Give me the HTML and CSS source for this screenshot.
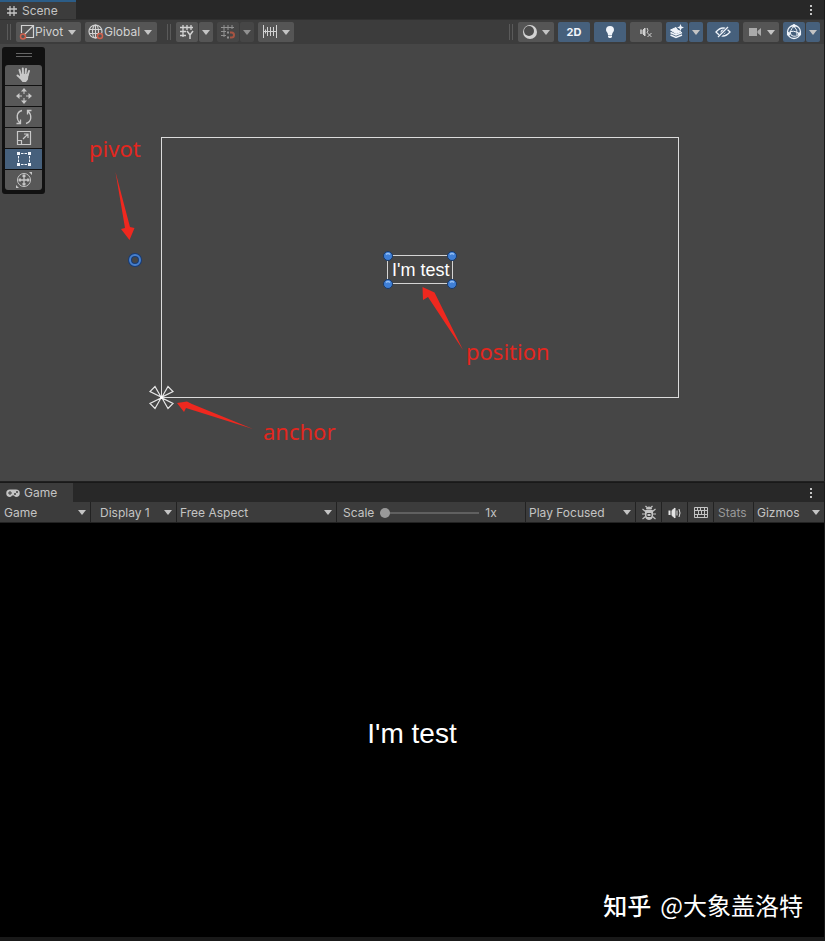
FILE: index.html
```html
<!DOCTYPE html>
<html lang="en">
<head>
<meta charset="utf-8">
<title>Scene and Game</title>
<link rel="stylesheet" href="styles.css">
</head>
<body>
<svg class="defs" aria-hidden="true">
  <symbol id="caret" viewBox="0 0 8 5"><path d="M0 0h8L4 5z" fill="currentColor"/></symbol>
  <symbol id="more" viewBox="0 0 4 12"><path d="M1 1h2v2H1zM1 5h2v2H1zM1 9h2v2H1z" fill="currentColor"/></symbol>
</svg>

<section class="panel scene">
  <header class="tabs">
    <button class="tab tab-focused">
      <svg class="tab-icon" width="12" height="12" viewBox="0 0 12 12"><path d="M4 1v10M8 1v10M1 4h10M1 8h10" stroke="currentColor" stroke-width="1.300" fill="none"/></svg>
      Scene
    </button>
    <button class="more" aria-label="Scene menu"><svg width="4" height="12"><use href="#more"/></svg></button>
  </header>

  <div class="toolbar">
    <div class="group">
      <i class="grip"></i>
      <label class="btn pick">
        <svg width="16" height="16" viewBox="0 0 16 16" fill="none"><path d="M2.500 9V1.500h12v12H7M5 11L14 2" stroke="currentColor" stroke-width="1.200"/><circle cx="4" cy="12.500" r="2.500" stroke="#d0604c" stroke-width="1.500"/></svg>
        <select class="pivot-select" aria-label="Tool handle position"><option>Pivot</option><option>Center</option></select>
        <svg class="caret" width="8" height="5"><use href="#caret"/></svg>
      </label>
      <label class="btn pick">
        <svg width="16" height="16" viewBox="0 0 16 16" fill="none"><g stroke="currentColor" stroke-width="1.200"><circle cx="7.500" cy="7.500" r="6.500"/><ellipse cx="7.500" cy="7.500" rx="3" ry="6.500"/><path d="M7.500 1v13M1.500 5.500h12M1.500 9.500h12"/></g><circle cx="12" cy="12" r="2.500" fill="#585858" stroke="#d0604c" stroke-width="1.500"/></svg>
        <select class="global-select" aria-label="Tool handle rotation"><option>Global</option><option>Local</option></select>
        <svg class="caret" width="8" height="5"><use href="#caret"/></svg>
      </label>
    </div>
    <div class="group">
      <i class="grip"></i>
      <div class="split">
        <button class="btn main" aria-label="Grid"><svg width="16" height="16" viewBox="0 0 16 16" fill="none" stroke="currentColor"><path d="M4 1v12M8 1v5M12 1v5M1 3.500h13M1 7.500h6M1 11.500h6" stroke-width="1.300"/><path d="M8 7l3 4 3-4M11 11v4" stroke-width="1.500"/></svg></button>
        <button class="btn drop" aria-label="Grid options"><svg class="caret" width="8" height="5"><use href="#caret"/></svg></button>
      </div>
      <div class="split dim">
        <button class="btn main" aria-label="Snap"><svg width="16" height="16" viewBox="0 0 16 16" fill="none" stroke="currentColor"><path d="M4 1v12M8 1v5M12 1v4M1 3.500h13M1 7.500h5M1 11.500h5"/><path d="M10 8.500h1.500a2.500 2.500 0 0 1 0 5H10" stroke="#a75442" stroke-width="2"/><path d="M7 8.500h2M7 13.500h2" stroke-width="2"/></svg></button>
        <button class="btn drop" aria-label="Snap options"><svg class="caret" width="8" height="5"><use href="#caret"/></svg></button>
      </div>
      <button class="btn combo" aria-label="Snap increment"><svg width="16" height="16" viewBox="0 0 16 16" fill="none" stroke="currentColor"><path d="M1.500 1v13M14.500 1v13M5.500 3v9M8.500 3v9M11.500 3v9M1 7.500h14M3.500 5.500v4"/></svg><svg class="caret" width="8" height="5"><use href="#caret"/></svg></button>
    </div>

    <div class="group group-right">
      <i class="grip"></i>
      <button class="btn combo" aria-label="Shading mode"><svg width="16" height="16" viewBox="0 0 16 16"><circle cx="8" cy="8" r="7" fill="currentColor"/><circle cx="7" cy="7" r="5" fill="#4c4c4c"/></svg><svg class="caret" width="8" height="5"><use href="#caret"/></svg></button>
      <button class="btn wide on two-d">2D</button>
      <button class="btn wide on" aria-label="Lighting"><svg width="16" height="16" viewBox="0 0 16 16" fill="currentColor"><path d="M8 2a4 4 0 0 1 4 4c0 2-2 2.500-2 5H6C6 8.500 4 8 4 6a4 4 0 0 1 4-4zM6 11.500h4V13l-1 1H7l-1-1z"/></svg></button>
      <button class="btn wide" aria-label="Audio"><svg width="16" height="16" viewBox="0 0 16 16" fill="none" stroke="currentColor"><path d="M3 5.500v4.500" stroke-width="1.500"/><path d="M5 6l2-2v8L5 10z" fill="currentColor"/><path d="M9 4q2 2 0 5M9.500 9l4 4M13.500 9l-4 4"/></svg></button>
      <div class="split">
        <button class="btn main on" aria-label="Effects"><svg width="16" height="16" viewBox="0 0 16 16" fill="none" stroke="currentColor"><path d="M1.500 6L7 3.500 8.500 6 12 7.500 7 9.500z" fill="currentColor"/><path d="M1.500 8.500L7 11l6-2.500M1.500 11L7 13.500l6-2.500" stroke-width="1.400"/><path d="M11.500 0l1 2.500L15 3.500l-2.500 1-1 2.500-1-2.500L8 3.500l2.500-1z" fill="currentColor" stroke="none"/></svg></button>
        <button class="btn drop on" aria-label="Effects options"><svg class="caret" width="8" height="5"><use href="#caret"/></svg></button>
      </div>
      <button class="btn wide on" aria-label="Hidden objects"><svg width="16" height="16" viewBox="0 0 16 16" fill="none" stroke="currentColor"><path d="M1 8q7-8 14 0-7 8-14 0z" stroke-width="1.300"/><circle cx="8" cy="8" r="2" fill="currentColor"/><path d="M4 13L13 3" stroke="#46607c" stroke-width="3"/><path d="M3 13L13 3" stroke-width="1.300"/></svg></button>
      <button class="btn combo" aria-label="Camera"><svg class="grey" width="16" height="16" viewBox="0 0 16 16" fill="currentColor"><path d="M2 4h8v8H2zM10.500 7L14 4v8l-3.500-3z"/></svg><svg class="caret" width="8" height="5"><use href="#caret"/></svg></button>
      <div class="split">
        <button class="btn main on" aria-label="Gizmos"><svg width="16" height="16" viewBox="0 0 16 16" fill="none" stroke="currentColor"><circle cx="8" cy="8" r="6.500" stroke-width="1.300"/><path d="M8 2q-5 5-3 9 4 3 9-1M8 2q4 4 3 9M2 9q5-4 12 1"/><g fill="currentColor" stroke="none"><circle cx="8" cy="1.700" r="1.700"/><circle cx="2.500" cy="10" r="1.700"/><circle cx="13.500" cy="10" r="1.700"/></g></svg></button>
        <button class="btn drop on" aria-label="Gizmo options"><svg class="caret" width="8" height="5"><use href="#caret"/></svg></button>
      </div>
    </div>
  </div>

  <div class="canvas">
    <svg class="drawing" width="700" height="420" viewBox="0 44 700 420" fill="none">
      <rect x="161.500" y="137.500" width="517" height="260" stroke="#dcdcdc"/>
      <g fill="#464646" stroke="#e6e6e6" stroke-width="1.200">
        <path d="M161 397L150 391.500 155 386.500zM162 397L168 386.500 173 391.500zM161 398L150 403.500 155 408.500zM162 398L168 408.500 173 403.500z"/>
      </g>
      <circle cx="161.500" cy="397.500" r="1.500" fill="#fff"/>
      <g fill="#ef281f">
        <path d="M115.500 172L130 227 134.500 228 129.500 240 121 229 125 228z"/>
        <path d="M463 350L437 297.500 434.500 292.500 422.500 287 423 300 428 297z"/>
        <path d="M253 429L192 404 187 401.500 177 403 184 412 186 408z"/>
      </g>
      <circle cx="135" cy="260" r="5" stroke="#173c78" stroke-width="4"/>
      <circle cx="135" cy="260" r="5" stroke="#4880cc" stroke-width="2"/>
      <rect x="387.500" y="255.500" width="65" height="28" stroke="#d4d4d4"/>
      <g fill="#3f7fd6" stroke="#183866">
        <circle cx="388" cy="256" r="4.500"/><circle cx="452" cy="256" r="4.500"/><circle cx="388" cy="284" r="4.500"/><circle cx="452" cy="284" r="4.500"/>
      </g>
      <path d="M386 254.500q2-2 4 0M450 254.500q2-2 4 0M386 282.500q2-2 4 0M450 282.500q2-2 4 0" stroke="#94bff5" stroke-width="1.500"/>
    </svg>
    <span class="object-text">I'm test</span>
    <span class="note note-pivot">pivot</span>
    <span class="note note-position">position</span>
    <span class="note note-anchor">anchor</span>

    <div class="tools">
      <i class="tools-grip"></i>
      <button class="tool" aria-label="Hand"><svg width="18" height="18" viewBox="0 0 18 18" fill="none" stroke="currentColor" stroke-width="2" stroke-linecap="round"><path d="M6 9L4.500 4M8 8.500L7.800 2.500M10.500 8.500L11 3M12.500 9.500L14 5M5.500 12L2.500 9.500"/><path d="M6 9h6.500l-.5 4-1.500 2H8l-2.500-3z" fill="currentColor"/></svg></button>
      <button class="tool" aria-label="Move"><svg width="18" height="18" viewBox="0 0 18 18" fill="currentColor"><path d="M9 1l3 3.500H6zM9 17l3-3.500H6zM1 9l3.500-3v6zM17 9l-3.500-3v6z"/><path d="M9 4v3M9 11v3M4 9h3M11 9h3" stroke="currentColor"/></svg></button>
      <button class="tool" aria-label="Rotate"><svg width="18" height="18" viewBox="0 0 18 18" fill="none" stroke="currentColor" stroke-width="1.300"><path d="M7 2.500C1 4 1 11 5 15M1.500 15.500h4v-4M11 15.500c6-1.500 6-8.500 2-12.500M16.500 2.500h-4v4"/></svg></button>
      <button class="tool" aria-label="Scale"><svg width="18" height="18" viewBox="0 0 18 18" fill="none" stroke="currentColor" stroke-width="1.200"><path d="M2.500 2.500h13v13h-13zM2.500 11.500h4v4M8 10l5-5M9 5h4v4"/></svg></button>
      <button class="tool on" aria-label="Rect"><svg width="18" height="18" viewBox="0 0 18 18" fill="currentColor"><path d="M2 2h3v3H2zM13 2h3v3h-3zM2 13h3v3H2zM13 13h3v3h-3z"/><path d="M6 3.500h2.500M9.500 3.500H12M6 14.500h2.500M9.500 14.500H12M3.500 6v2.500M3.500 9.500V12M14.500 6v2.500M14.500 9.500V12" stroke="currentColor"/></svg></button>
      <button class="tool" aria-label="Transform"><svg width="18" height="18" viewBox="0 0 18 18" fill="none" stroke="currentColor"><circle cx="9" cy="9" r="6.500"/><path d="M9 4v10M4 9h10M7.500 5.500L9 4l1.500 1.500M7.500 12.500L9 14l1.500-1.500M5.500 7.500L4 9l1.500 1.500M12.500 7.500L14 9l-1.500 1.500" stroke-width="1.300"/><path d="M14 1h3v3zM1 14v3h3z" fill="currentColor" stroke="none"/></svg></button>
    </div>
  </div>
</section>

<section class="panel game">
  <header class="tabs">
    <button class="tab">
      <svg class="tab-icon" width="14" height="12" viewBox="0 0 14 12"><path d="M4 2.500h6a3.500 3.500 0 0 1 0 7.500Q8.500 9.500 8 8.500H6Q5.500 9.500 4 10a3.500 3.500 0 0 1 0-7.500z" fill="currentColor"/><path d="M2 6h4M4 4v4" stroke="#3c3c3c"/><circle cx="9" cy="7" r="1" fill="#3c3c3c"/><circle cx="11" cy="5" r="1" fill="#3c3c3c"/></svg>
      Game
    </button>
    <button class="more" aria-label="Game menu"><svg width="4" height="12"><use href="#more"/></svg></button>
  </header>

  <div class="gamebar">
    <label class="cell cell-game"><select aria-label="View"><option>Game</option><option>Simulator</option></select><svg class="caret" width="8" height="5"><use href="#caret"/></svg></label>
    <label class="cell cell-display"><select aria-label="Display"><option>Display 1</option><option>Display 2</option></select><svg class="caret" width="8" height="5"><use href="#caret"/></svg></label>
    <label class="cell cell-aspect"><select aria-label="Aspect"><option>Free Aspect</option><option>16:9</option></select><svg class="caret" width="8" height="5"><use href="#caret"/></svg></label>
    <div class="cell cell-scale"><label for="scale">Scale</label><input id="scale" type="range" min="1" max="5" value="1"><output for="scale">1x</output></div>
    <label class="cell cell-play"><select aria-label="Play mode"><option>Play Focused</option><option>Play Maximized</option></select><svg class="caret" width="8" height="5"><use href="#caret"/></svg></label>
    <button class="cell cell-icon" aria-label="Debug"><svg width="16" height="16" viewBox="0 0 16 16" fill="none" stroke="currentColor"><path d="M5.500 4a2.500 2 0 0 1 5 0zM4.500 5.500h7V11a3.500 3.500 0 0 1-7 0z" fill="currentColor"/><path d="M1.500 4l3 2.500M14.500 4l-3 2.500M1 9h3M15 9h-3M1.500 14l3-2.500M14.500 14l-3-2.500M4.500 1l1.500 1.500M11.500 1L10 2.500" stroke-width="1.200"/><path d="M6 8.500h4v3H6z" stroke="#3c3c3c"/></svg></button>
    <button class="cell cell-icon" aria-label="Mute audio"><svg width="16" height="16" viewBox="0 0 16 16" fill="none" stroke="#e4e4e4"><path d="M2.500 5.500v4.500" stroke-width="2"/><path d="M5 5.500L8 3v10l-3-2.500z" fill="#e4e4e4"/><path d="M10 5.500v5M12 4q2 4 0 8"/></svg></button>
    <button class="cell cell-icon" aria-label="Shortcuts"><svg width="16" height="16" viewBox="0 0 16 16" fill="none" stroke="currentColor"><path d="M1.500 2.500h13v10h-13zM1 5.500h14M1 9.500h14M4.500 2v4M7.500 2v4M11.500 2v4M5.500 6v3M8.500 6v3M11.500 6v3M4.500 10v3M11.500 10v3"/></svg></button>
    <button class="cell cell-stats">Stats</button>
    <button class="cell cell-gizmos">Gizmos<svg class="caret" width="8" height="5"><use href="#caret"/></svg></button>
  </div>

  <div class="view">
    <p class="game-text">I'm test</p>
    <p class="credit"><b>知乎</b>@大象盖洛特</p>
  </div>
</section>
</body>
</html>
```
FILE: styles.css
```css
* { box-sizing: border-box; }

body {
  margin: 0;
  min-height: 100vh;
  display: grid;
  grid-template-rows: 482fr 459fr;
  background: #191919;
  color: #c4c4c4;
  font: 12px/16px Inter, "Liberation Sans", sans-serif;
}

button, select, input { margin: 0; padding: 0; border: 0; background: none; color: inherit; font: inherit; }
select { appearance: none; outline: 0; }
p { margin: 0; }
svg { display: block; flex: none; }
.defs { position: absolute; width: 0; height: 0; }
.caret { width: 8px; height: 5px; color: #c4c4c4; }

.panel { display: flex; flex-direction: column; min-width: 0; padding-right: 1px; }
.scene { border-bottom: 1px solid #202020; }

.tabs { display: flex; justify-content: space-between; height: 19px; background: #282828; }
.tab { display: flex; align-items: center; gap: 4px; padding: 0 16px 0 6px; background: #3c3c3c; }
.tab-focused { padding-right: 18px; border-top: 2px solid #2c5d87; }
.more { width: 26px; display: grid; place-items: center; }

.toolbar { display: flex; justify-content: space-between; height: 25px; padding: 2px 4px 2px 7px; background: #3c3c3c; border-top: 1px solid #303030; }
.group { display: flex; align-items: center; gap: 4px; }
.group:nth-child(2) { margin-left: 10px; }
.group-right { margin-left: auto; }
.grip { width: 4px; height: 16px; margin-right: 1px; border: solid #5a5a5a; border-width: 0 1px; }
.btn { height: 20px; display: flex; align-items: center; justify-content: center; border-radius: 2px; background: #555; color: #d2d2d2; }
.pick { padding: 0 5px 0 3px; font-size: 12px; }
.pick .caret { margin-left: 1px; }
.pivot-select { width: 32px; }
.global-select { width: 39px; }
.split { display: flex; gap: 1px; }
.main { width: 22px; }
.drop { width: 14px; }
.combo { width: 36px; gap: 4px; }
.wide { width: 32px; }
.btn.on, .tool.on { background: #46607c; color: #f0f4fa; }
.two-d { font-size: 11px; font-weight: 700; }
.dim .btn { background: #464646; color: #919191; }
.dim .caret { color: #919191; }
.grey { color: #aaa; }

.canvas { position: relative; flex: 1; overflow: hidden; background: #464646; }
.drawing { position: absolute; left: 0; top: 0; }
.object-text { position: absolute; left: 392px; top: 216px; color: #fff; font: 18px/20px "Liberation Sans", sans-serif; }
.note { position: absolute; color: #e3261e; font: 22px/26px "Noto Sans", sans-serif; }
.note-pivot { left: 89px; top: 91px; }
.note-position { left: 466px; top: 294px; }
.note-anchor { left: 263px; top: 374px; }

.tools { position: absolute; left: 2px; top: 3px; width: 43px; padding: 6px 3px 4px; display: flex; flex-direction: column; gap: 1px; border-radius: 3px; background: #111; }
.tools-grip { align-self: center; width: 16px; height: 4px; margin-bottom: 7px; border: solid #666; border-width: 1px 0; }
.tool { height: 20px; display: grid; place-items: center; background: #585858; color: #c8c8c8; }
.tool:nth-child(2) { border-radius: 3px 3px 0 0; }
.tool:last-child { border-radius: 0 0 3px 3px; }

.game { padding-top: 1px; padding-bottom: 4px; }
.gamebar { display: flex; height: 21px; background: #3c3c3c; border-bottom: 1px solid #222; }
.cell { display: flex; align-items: center; padding: 1px 4px 0; border-right: 1px solid #222; }
.cell:last-child { border-right: 0; }
.cell select { flex: 1; min-width: 0; }
.cell-game { width: 91px; }
.cell-display { width: 86px; padding-left: 9px; }
.cell-aspect { width: 160px; padding-left: 3px; }
.cell-scale { flex: 1; gap: 6px; padding-left: 6px; }
.cell-play { width: 110px; padding-left: 3px; }
.cell-icon { width: 26px; justify-content: center; }
.cell-stats { width: 40px; color: #999; }
.cell-gizmos { width: 70px; padding-left: 3px; justify-content: space-between; }

#scale { appearance: none; width: 99px; height: 12px; }
#scale::-webkit-slider-runnable-track { height: 2px; background: #606060; }
#scale::-webkit-slider-thumb { appearance: none; width: 10px; height: 10px; margin-top: -4px; border-radius: 50%; background: #999; }

.view { position: relative; flex: 1; display: grid; place-items: center; padding-top: 8px; background: #000; }
.game-text { color: #fff; font: 28px/32px "Liberation Sans", sans-serif; }
.credit { position: absolute; right: 21px; bottom: 16px; display: flex; gap: 9px; color: #fff; font: 24px/32px "Noto Sans CJK SC", sans-serif; }
.credit b { font-weight: 500; }
```
